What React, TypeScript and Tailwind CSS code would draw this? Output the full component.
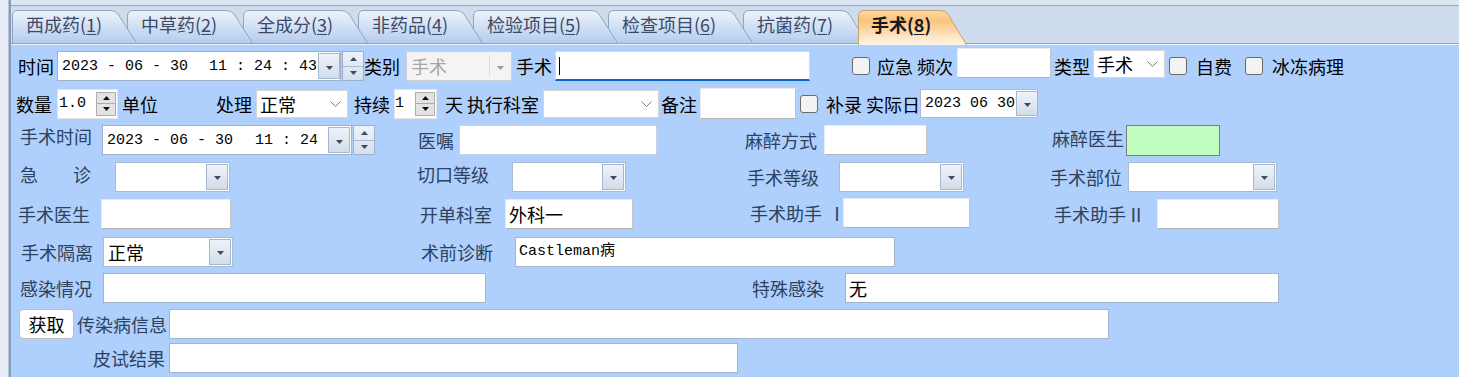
import React from 'react';

type Cls = { className?: string };

const TABS = [
  { label: '西成药', num: '1', w: 125, className: 'ml-[1px] z-[8]' },
  { label: '中草药', num: '2', w: 126, className: '-ml-[10px] z-[7]' },
  { label: '全成分', num: '3', w: 125, className: '-ml-[10px] z-[6]' },
  { label: '非药品', num: '4', w: 125, className: '-ml-[10px] z-[5]' },
  { label: '检验项目', num: '5', w: 145, className: '-ml-[10px] z-[4]' },
  { label: '检查项目', num: '6', w: 145, className: '-ml-[10px] z-[3]' },
  { label: '抗菌药', num: '7', w: 125, className: '-ml-[10px] z-[2]' },
];

function Tab({ label, num, w, className = '', active = false }: { label: string; num: string; w: number; className?: string; active?: boolean }) {
  const h = active ? 35 : 33;
  const d = `M0.5 ${h} V6 Q0.5 0.5 6 0.5 H${w - 27} Q${w - 22} 0.5 ${w - 19} 4 L${w - 0.5} ${h}`;
  return (
    <div className={`relative shrink-0 ${active ? 'h-[35px]' : 'mb-[2px] h-[33px]'} ${className}`} style={{ width: w }}>
      <svg className="absolute inset-0" width={w} height={h} viewBox={`0 0 ${w} ${h}`}>
        <defs>
          <linearGradient id="tab-off" x1="0" y1="0" x2="0" y2="1">
            <stop offset="0" stopColor="#eef3fb" />
            <stop offset="1" stopColor="#b4cdee" />
          </linearGradient>
          <linearGradient id="tab-on" x1="0" y1="0" x2="0" y2="1">
            <stop offset="0" stopColor="#fdd9a6" />
            <stop offset="0.3" stopColor="#fcc37c" />
            <stop offset="1" stopColor="#fff6e8" />
          </linearGradient>
        </defs>
        <path d={d + ' Z'} fill={active ? 'url(#tab-on)' : 'url(#tab-off)'} />
        <path d={d} fill="none" stroke={active ? '#c9a36a' : '#8ea5c5'} />
      </svg>
      <div
        className={`relative flex h-full items-center whitespace-nowrap text-[18px] leading-none ${
          active ? 'pb-[8px] pl-[13px] font-bold text-[#1a1a1a]' : 'pb-[6px] pl-[14px] text-[#3b4a66]'
        }`}
      >
        {label}(<span className="underline underline-offset-2">{num}</span>)
      </div>
    </div>
  );
}

function L({ className = '', navy = false, children }: Cls & { navy?: boolean; children: React.ReactNode }) {
  return (
    <div className={`shrink-0 whitespace-nowrap text-[18px] leading-none ${navy ? 'text-[#2c4260]' : 'text-black'} ${className}`}>
      {children}
    </div>
  );
}

function TriDown({ color = '#3f4a5c' }: { color?: string }) {
  return (
    <svg width="7" height="4" viewBox="0 0 7 4">
      <path d="M0 0h7L3.5 4z" fill={color} />
    </svg>
  );
}

function TriUp({ color = '#3f4a5c' }: { color?: string }) {
  return (
    <svg width="7" height="4" viewBox="0 0 7 4">
      <path d="M0 4h7L3.5 0z" fill={color} />
    </svg>
  );
}

function Chevron() {
  return (
    <svg width="11" height="6" viewBox="0 0 11 6">
      <polyline points="0.5,0.5 5.5,5.5 10.5,0.5" fill="none" stroke="#7a7a7a" />
    </svg>
  );
}

function DropBtn() {
  return (
    <div className="m-px flex w-[22px] shrink-0 items-center justify-center self-stretch border border-[#a4b6d0] bg-gradient-to-b from-[#eef3fa] to-[#d2ddec] pt-[3px]">
      <TriDown />
    </div>
  );
}

function BlueSpin() {
  return (
    <div className="ml-px flex w-[22px] shrink-0 flex-col border border-[#9fb1ca] bg-gradient-to-b from-[#eef3fa] to-[#d6e0ee]">
      <div className="flex flex-1 items-center justify-center border-b border-[#a9bad1]">
        <TriUp />
      </div>
      <div className="flex flex-1 items-center justify-center">
        <TriDown />
      </div>
    </div>
  );
}

function GraySpin() {
  return (
    <div className="my-[2px] mr-px flex w-[20px] shrink-0 flex-col border border-[#adadad] bg-[#e3e3e3]">
      <div className="flex flex-1 items-center justify-center border-b border-[#adadad]">
        <TriUp color="#111" />
      </div>
      <div className="flex flex-1 items-center justify-center">
        <TriDown color="#111" />
      </div>
    </div>
  );
}

const mono = "font-['Liberation_Mono','Noto_Sans_CJK_SC',monospace] text-[15px] leading-none text-black";

function DateTime({ className = '', box, date, time, gap }: Cls & { box: string; date: string; time: string; gap: string }) {
  return (
    <div className={`flex h-[30px] shrink-0 ${className}`}>
      <div className={`flex items-stretch border border-[#9fb1ca] bg-white ${box}`}>
        <div className={`flex flex-1 items-center whitespace-pre pl-[4px] ${mono}`}>
          <span>{date}</span>
          <span className={gap}>{time}</span>
        </div>
        <DropBtn />
      </div>
      <BlueSpin />
    </div>
  );
}

function BlueCombo({ className = '', value }: Cls & { value?: string }) {
  return (
    <div className={`flex h-[30px] shrink-0 items-stretch border border-[#a9bad1] bg-white ${className}`}>
      <div className="flex flex-1 items-center pl-[4px] text-[18px] leading-none">{value}</div>
      <DropBtn />
    </div>
  );
}

function Combo({ className = '', value }: Cls & { value?: string }) {
  return (
    <div className={`flex h-[28px] shrink-0 items-center justify-between border border-[#d5d5d5] bg-white pl-[3px] pr-[6px] ${className}`}>
      <span className="text-[18px] leading-none">{value}</span>
      <Chevron />
    </div>
  );
}

function Input({ className = '', children }: Cls & { children?: React.ReactNode }) {
  return (
    <div className={`flex h-[30px] shrink-0 items-center border border-[#a3b4cc] bg-white pl-[3px] text-[18px] leading-none ${className}`}>
      {children}
    </div>
  );
}

function SInput({ className = '', children }: Cls & { children?: React.ReactNode }) {
  return (
    <div
      className={`flex h-[30px] shrink-0 items-center border border-[#e6ebf2] border-r-[#c4c4c4] border-b-[#b4b4b4] bg-white pl-[3px] text-[18px] leading-none ${className}`}
    >
      {children}
    </div>
  );
}

function Check({ className = '' }: Cls) {
  return <div className={`h-[18px] w-[18px] shrink-0 rounded-[3px] border border-[#6a6a6a] bg-[#f3f3f3] ${className}`} />;
}

function Numeric({ className = '', value, text }: Cls & { value: string; text: string }) {
  return (
    <div className={`flex h-[30px] shrink-0 items-stretch border border-[#e3e3e3] bg-white ${className}`}>
      <div className={`flex flex-1 items-center ${mono} ${text}`}>{value}</div>
      <GraySpin />
    </div>
  );
}

export default function App() {
  return (
    <div className="flex h-[377px] w-[1459px] overflow-hidden bg-white font-['Noto_Sans_CJK_SC','Noto_Sans',sans-serif]">
      {/* left frame */}
      <div className="w-[8px] shrink-0 bg-[#e7eef7]" />
      <div className="w-px shrink-0 bg-[#b6c3d8]" />
      <div className="w-[2px] shrink-0 bg-[#8a9bb9]" />

      <div className="flex min-w-0 flex-1 flex-col">
        <div className="h-[5px] shrink-0 bg-[#dde7f3]" />
        <div className="h-px shrink-0 bg-[#93a7c3]" />

        {/* tab strip */}
        <div className="flex h-[39px] shrink-0 items-end bg-[#cfdcee] shadow-[inset_0_-1px_0_#eef4fc,inset_0_-2px_0_#8fa5c4]">
          {TABS.map((t) => (
            <Tab key={t.num} label={t.label} num={t.num} w={t.w} className={t.className} />
          ))}
          <Tab label="手术" num="8" w={109} className="-ml-[10px] z-[10]" active />
        </div>

        {/* panel */}
        <div className="flex flex-1 flex-col bg-[#afd0fc] pt-[2px]">
          {/* row 1 */}
          <div className="flex h-[38px] shrink-0 items-center">
            <L className="ml-[7px] w-[36px]">时间</L>
            <DateTime className="ml-[3px]" box="w-[284px]" date="2023 - 06 - 30" time="11 : 24 : 43" gap="ml-[21px]" />
            <L className="w-[40px]">类别</L>
            <div className="ml-[2px] flex h-[30px] w-[106px] shrink-0 items-stretch border border-[#d0d0d0] bg-[#f4f4f4]">
              <div className="flex flex-1 items-center pl-[4px] text-[18px] leading-none text-[#a6a6a6]">手术</div>
              <div className="my-[3px] flex w-[22px] items-center justify-center border-l border-[#dcdcdc] pt-[3px]">
                <TriDown color="#9a9a9a" />
              </div>
            </div>
            <L className="ml-[4px] w-[36px]">手术</L>
            <div className="ml-[3px] flex h-[30px] w-[255px] shrink-0 items-center border border-[#dadada] border-b-2 border-b-[#0a64c8] bg-white">
              <div className="ml-[3px] h-[18px] w-px bg-black" />
            </div>
            <Check className="ml-[42px]" />
            <L className="ml-[7px] w-[78px]">应急 频次</L>
            <SInput className="mb-[6px] ml-[2px] w-[94px]" />
            <L className="ml-[3px] w-[36px]">类型</L>
            <Combo className="mb-[4px] ml-[3px] w-[72px]" value="手术" />
            <Check className="ml-[4px]" />
            <L className="ml-[9px] w-[36px]">自费</L>
            <Check className="ml-[13px]" />
            <L className="ml-[9px] w-[72px]">冰冻病理</L>
          </div>

          {/* row 2 */}
          <div className="flex h-[37px] shrink-0 items-center">
            <L className="ml-[5px] w-[36px]">数量</L>
            <Numeric className="ml-[5px] w-[61px]" value="1.0" text="pl-px" />
            <L className="ml-[4px] w-[36px]">单位</L>
            <L className="ml-[58px] w-[36px]">处理</L>
            <Combo className="ml-[4px] w-[92px]" value="正常" />
            <L className="ml-[6px] w-[36px]">持续</L>
            <Numeric className="ml-[4px] w-[43px]" value="1" text="pl-0" />
            <L className="ml-[8px] w-[95px]">天 执行科室</L>
            <Combo className="ml-[3px] w-[116px]" />
            <L className="ml-[2px] w-[36px]">备注</L>
            <SInput className="ml-[3px] h-[31px] w-[96px]" />
            <Check className="ml-[4px]" />
            <L className="ml-[8px] w-[92px]">补录 实际日</L>
            <div className="ml-[2px] flex h-[29px] w-[118px] shrink-0 items-stretch border border-[#a9bad1] bg-white">
              <div className={`flex flex-1 items-center whitespace-pre pl-[4px] ${mono}`}>2023 06 30</div>
              <DropBtn />
            </div>
          </div>

          {/* row 3 */}
          <div className="flex h-[36px] shrink-0 items-center">
            <L navy className="mb-[8px] ml-[9px] w-[72px]">手术时间</L>
            <DateTime className="ml-[10px]" box="w-[250px]" date="2023 - 06 - 30" time="11 : 24" gap="ml-[22px]" />
            <L navy className="ml-[43px] w-[36px]">医嘱</L>
            <Input className="ml-[5px] w-[198px] border-[#c9d2de]" />
            <L navy className="ml-[88px] w-[72px]">麻醉方式</L>
            <SInput className="ml-[7px] w-[103px]" />
            <L navy className="mb-[4px] ml-[125px] w-[72px]">麻醉医生</L>
            <div className="ml-[2px] h-[31px] w-[94px] shrink-0 border border-[#7d7d7d] bg-[#c0fcc0]" />
          </div>

          {/* row 4 */}
          <div className="flex h-[37px] shrink-0 items-center">
            <L navy className="mb-[6px] ml-[9px] flex w-[71px] justify-between">
              <span>急</span>
              <span>诊</span>
            </L>
            <BlueCombo className="ml-[24px] w-[115px]" />
            <L navy className="mb-[5px] ml-[187px] w-[72px]">切口等级</L>
            <BlueCombo className="ml-[23px] w-[114px]" />
            <L navy className="ml-[121px] w-[72px]">手术等级</L>
            <BlueCombo className="ml-[20px] w-[125px]" />
            <L navy className="ml-[86px] w-[72px]">手术部位</L>
            <BlueCombo className="ml-[6px] w-[149px]" />
          </div>

          {/* row 5 */}
          <div className="flex h-[38px] shrink-0 items-center">
            <L navy className="ml-[7px] w-[72px]">手术医生</L>
            <SInput className="ml-[11px] w-[130px]" />
            <L navy className="ml-[189px] w-[72px]">开单科室</L>
            <SInput className="ml-[13px] w-[128px]">外科一</SInput>
            <L navy className="mb-[2px] ml-[117px] w-[90px]">
              手术助手<span className="ml-[6px]">Ⅰ</span>
            </L>
            <SInput className="mb-[2px] ml-[3px] w-[127px]" />
            <L navy className="ml-[84px] w-[90px]">
              手术助手<span className="ml-[1px]">Ⅱ</span>
            </L>
            <SInput className="ml-[13px] w-[122px]" />
          </div>

          {/* row 6 */}
          <div className="flex h-[37px] shrink-0 items-center">
            <L navy className="ml-[10px] w-[72px]">手术隔离</L>
            <BlueCombo className="ml-[10px] w-[130px]" value="正常" />
            <L navy className="ml-[188px] w-[72px]">术前诊断</L>
            <Input className="ml-[22px] w-[380px]">
              <span className={mono}>Castleman病</span>
            </Input>
          </div>

          {/* row 7 */}
          <div className="flex h-[36px] shrink-0 items-center">
            <L navy className="ml-[9px] w-[72px]">感染情况</L>
            <Input className="ml-[11px] w-[383px]" />
            <L navy className="ml-[266px] w-[72px]">特殊感染</L>
            <Input className="ml-[21px] w-[434px]">无</Input>
          </div>

          {/* row 8 */}
          <div className="flex h-[35px] shrink-0 items-center">
            <button className="ml-[8px] flex h-[30px] w-[55px] shrink-0 items-center justify-center rounded-[4px] border border-[#bdbdbd] bg-white text-[18px] leading-none text-black">
              获取
            </button>
            <L navy className="ml-[3px] w-[90px]">传染病信息</L>
            <Input className="ml-[2px] w-[940px]" />
          </div>

          {/* row 9 */}
          <div className="flex h-[34px] shrink-0 items-center">
            <L navy className="ml-[82px] w-[72px]">皮试结果</L>
            <Input className="ml-[4px] w-[569px]" />
          </div>
        </div>
      </div>
    </div>
  );
}
